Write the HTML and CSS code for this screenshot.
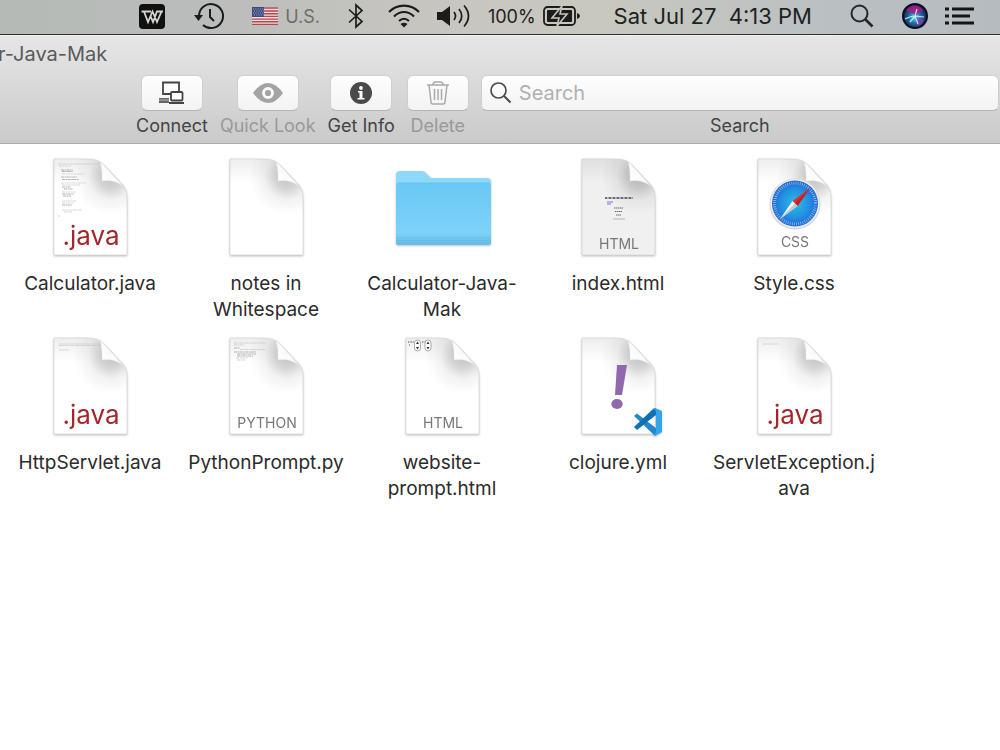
FILE: index.html
```html
<!DOCTYPE html>
<html lang="en">
<head>
  <meta charset="UTF-8" />
  <meta name="viewport" content="width=device-width, initial-scale=1" />
  <title>Calculator-Java-Mak</title>
  <link rel="stylesheet" href="styles.css">
</head>
<body>
  <!-- Shared shapes -->
  <svg class="defs" width="0" height="0" aria-hidden="true">
    <defs>
      <radialGradient id="shade" gradientUnits="userSpaceOnUse" cx="71" cy="19" r="38">
        <stop offset="0" stop-color="#000" stop-opacity=".24" />
        <stop offset=".3" stop-color="#000" stop-opacity=".17" />
        <stop offset=".6" stop-color="#000" stop-opacity=".05" />
        <stop offset="1" stop-color="#000" stop-opacity="0" />
      </radialGradient>
      <linearGradient id="topShade" x1="0" y1="0" x2="0" y2="1">
        <stop offset="0" stop-color="#000" stop-opacity=".07" />
        <stop offset=".25" stop-color="#000" stop-opacity="0" />
      </linearGradient>
      <linearGradient id="fold" gradientUnits="userSpaceOnUse" x1="62" y1="24" x2="74" y2="13">
        <stop offset="0" stop-color="#fff" />
        <stop offset=".75" stop-color="#fafafa" />
        <stop offset="1" stop-color="#dedede" />
      </linearGradient>
      <linearGradient id="folderFront" x1="0" y1="0" x2="0" y2="1">
        <stop offset="0" stop-color="#69c9f5" />
        <stop offset=".8" stop-color="#7dd2f9" />
        <stop offset="1" stop-color="#66bce6" />
      </linearGradient>
      <radialGradient id="compass">
        <stop offset="0" stop-color="#28bfe0" />
        <stop offset=".6" stop-color="#2391e3" />
        <stop offset="1" stop-color="#2464d2" />
      </radialGradient>
      <radialGradient id="siri" cx=".5" cy=".55">
        <stop offset="0" stop-color="#7fdcec" />
        <stop offset=".45" stop-color="#2478ad" />
        <stop offset="1" stop-color="#15204e" />
      </radialGradient>
      <symbol id="page" viewBox="0 0 100 100">
        <path d="M14 1H46C54 1 58 2 63 6L81 25C86 30 87 34 87 42V97H14Z" fill="currentColor" />
        <path d="M14 1H46C54 1 58 2 63 6L81 25C86 30 87 34 87 42V97H14Z" fill="url(#topShade)" />
        <path d="M14 1H46C54 1 58 2 63 6L81 25C86 30 87 34 87 42V97H14Z" fill="url(#shade)" stroke="#d2d2d2" stroke-width=".6" />
        <path d="M60 4C62 10 62 17 62 23C69 22 77 23 84 29L63 6Z" fill="url(#fold)" stroke="#dadada" stroke-width=".4" />
      </symbol>
    </defs>
  </svg>

  <header class="menubar">
    <svg class="icon-wps" width="27" height="27" viewBox="0 0 27 27">
      <rect y="1" width="26" height="25" rx="4" fill="#10110f" />
      <path d="M2.500 8.500H12M5 8.500L9 19L13.500 8.500L18 19L22.500 8.500M11.500 13L14 19L18 8.500H24" fill="none" stroke="#d2d3d2" stroke-width="1.800" />
    </svg>
    <svg class="icon-clock" width="30" height="28" viewBox="0 0 30 28">
      <path d="M5 14A12 12 0 1 1 9 23" fill="none" stroke="#1c1d1b" stroke-width="2" />
      <path d="M0 13H9L4.500 19Z" fill="#1c1d1b" />
      <path d="M16 7V15L20 19" fill="none" stroke="#1c1d1b" stroke-width="2" />
    </svg>
    <svg class="icon-flag" width="26" height="18" viewBox="0 0 26 18">
      <path d="M0 0H26V18H0Z" fill="#e9e2e0" />
      <path d="M0 1H26M0 4H26M0 6.700H26M0 9.400H26M0 12.100H26M0 14.800H26M0 17.400H26" stroke="#b8444c" stroke-width="1.400" />
      <path d="M0 0H12V10H0Z" fill="#3c4a80" />
      <path d="M1 2H12M2 4H12M1 6H12M2 8H12" stroke="#aab0cc" stroke-width="1" stroke-dasharray="1 1.300" />
    </svg>
    <span class="input-source">U.S.</span>
    <svg class="icon-bluetooth" width="16" height="26" viewBox="0 0 16 26">
      <path d="M1 6.500L14 18.500L8 24V2L14 7.500L1 19.500" fill="none" stroke="#1c1d1b" stroke-width="1.700" />
    </svg>
    <svg class="icon-wifi" width="32" height="24" viewBox="0 0 32 24">
      <path d="M1 8C9 -.5 23 -.5 31 8M6 12.500C12 6.500 20 6.500 26 12.500M11 17C14 14 18 14 21 17" fill="none" stroke="#1c1d1b" stroke-width="2.200" />
      <path d="M12.500 20Q16 17.500 19.500 20L16 23.500Z" fill="#1c1d1b" />
    </svg>
    <svg class="icon-volume" width="34" height="26" viewBox="0 0 34 26">
      <path d="M0 9H5L13 3V23L5 17H0Z" fill="#1c1d1b" />
      <path d="M17 9Q20 13 17 17M22 6Q27.500 13 22 20M27 2.500Q36 13 27 23.500" fill="none" stroke="#1c1d1b" stroke-width="1.700" />
    </svg>
    <span class="battery-level">100%</span>
    <svg class="icon-battery" width="37" height="22" viewBox="0 0 37 22">
      <rect x="1" y="2" width="31" height="18" rx="3.500" fill="none" stroke="#1c1d1b" stroke-width="1.800" />
      <path d="M34 8Q37 9 37 11Q37 13 34 14Z" fill="#1c1d1b" />
      <rect x="4" y="5" width="25" height="12" rx="1" fill="#1c1d1b" />
      <path d="M19 1L9 13H16L14 21L24 9H17Z" fill="#1c1d1b" stroke="#c6c5be" stroke-width="1.600" />
    </svg>
    <time class="clock">Sat Jul 27  4:13 PM</time>
    <svg class="icon-search" width="24" height="24" viewBox="0 0 24 24">
      <circle cx="9.500" cy="9.500" r="8" fill="none" stroke="#252729" stroke-width="2" />
      <path d="M15 15L22.500 22.500" stroke="#252729" stroke-width="2.600" />
    </svg>
    <svg class="icon-siri" width="26" height="26" viewBox="0 0 26 26">
      <circle cx="13" cy="13" r="12" fill="url(#siri)" stroke="#0d0e22" stroke-width="2" />
      <path d="M4 7Q13 -2 21 7L14 12Z" fill="#b01a80" opacity=".85" />
      <path d="M14 14L22 17Q19 23 15 23Z" fill="#8b3fae" opacity=".7" />
      <path d="M3 16Q9 13 13 13L15 6M13 13L22 14M13 13L8 19M13 13L16 21" fill="none" stroke="#b5ecf5" stroke-width="1.200" />
    </svg>
    <svg class="icon-list" width="30" height="18" viewBox="0 0 30 18">
      <path d="M0 2H4M7 2H29M0 9H4M7 9H25M0 16H4M7 16H29" stroke="#141516" stroke-width="3" />
    </svg>
  </header>

  <section class="toolbar">
    <h1 class="window-title">r-Java-Mak</h1>
    <div class="tools">
      <div class="tool">
        <button id="connect" type="button">
          <svg width="26" height="24" viewBox="0 0 26 24">
            <path d="M4 1.500H20V13H4Z" fill="#fff" stroke="#444" stroke-width="1.800" />
            <path d="M0 17H10V22H0Z" fill="#666" /><path d="M0 19H10" stroke="#bbb" stroke-width="1" />
            <rect x="12" y="11" width="11.500" height="8.500" rx="1" fill="#fff" stroke="#444" stroke-width="1.800" />
            <path d="M10 21H25V23H10Z" fill="#444" />
          </svg>
        </button>
        <label for="connect">Connect</label>
      </div>
      <div class="tool off">
        <button id="look" type="button" disabled>
          <svg width="30" height="20" viewBox="0 0 30 20">
            <path d="M0 10Q7 0 15 0Q23 0 30 10Q23 20 15 20Q7 20 0 10Z" fill="#a3a3a3" />
            <circle cx="15" cy="10" r="4.500" fill="#a3a3a3" stroke="#fafafa" stroke-width="2.800" />
          </svg>
        </button>
        <label for="look">Quick Look</label>
      </div>
      <div class="tool">
        <button id="info" type="button">
          <svg width="22" height="22" viewBox="0 0 22 22">
            <circle cx="11" cy="11" r="11" fill="#4a4a4a" />
            <circle cx="11" cy="6" r="1.900" fill="#fff" />
            <path d="M8 9H12.500V16H14.500V17.500H7.500V16H9.500V10.500H8Z" fill="#fff" />
          </svg>
        </button>
        <label for="info">Get Info</label>
      </div>
      <div class="tool off">
        <button id="delete" type="button" disabled>
          <svg width="22" height="24" viewBox="0 0 22 24">
            <path d="M0 4H22M6 4Q6 1 9 1H13Q16 1 16 4M2 4L4 21Q4 23 6 23H16Q18 23 18 21L20 4M7.500 8V19M11 8V19M14.500 8V19" fill="none" stroke="#aaa" stroke-width="1.500" />
          </svg>
        </button>
        <label for="delete">Delete</label>
      </div>
      <div class="tool search">
        <div class="search-box">
          <svg width="22" height="22" viewBox="0 0 22 22">
            <circle cx="8.500" cy="8.500" r="7.500" fill="none" stroke="#4c4c4c" stroke-width="1.700" />
            <path d="M14 14L20.500 20.500" stroke="#4c4c4c" stroke-width="2" />
          </svg>
          <input id="search" type="text" placeholder="Search">
        </div>
        <label for="search">Search</label>
      </div>
    </div>
  </section>

  <main class="files">
    <figure class="file">
      <svg viewBox="0 0 100 100">
        <use href="#page" />
        <g class="code">
          <path d="M18 6H60M19 8H31M22 16H44M21 25H46M22 27H40M22 34H36M22 43H36M22 45H34M22 52H42M24 54H32M18 58H20" />
          <path class="strong" d="M21 12H33M22 13.500H33M21 19H37M22 21.500H39M22 29H31M24 31H33M22 36H34M23 38H31M22 47H32" />
        </g>
        <text class="ext" x="51" y="87">.java</text>
      </svg>
      <figcaption>Calculator.java</figcaption>
    </figure>
    <figure class="file">
      <svg viewBox="0 0 100 100"><use href="#page" /></svg>
      <figcaption>notes in Whitespace</figcaption>
    </figure>
    <figure class="file">
      <svg viewBox="0 0 100 100">
        <path d="M4 17Q4 13 8 13H30Q33 13 35 16L39 20H95Q99 20 99 24V60H4Z" fill="#8ed8fb" />
        <rect x="4" y="25" width="95" height="62" rx="2.500" fill="url(#folderFront)" />
        <path d="M4 80H99M4 82.500H99M4 85H99" stroke="#62b8e1" stroke-width=".6" />
        <path d="M6 25H97" stroke="#62bde9" stroke-width=".7" />
      </svg>
      <figcaption>Calculator-Java-Mak</figcaption>
    </figure>
    <figure class="file">
      <svg viewBox="0 0 100 100">
        <use href="#page" class="tinted" />
        <path d="M37 40H65" stroke="#445" stroke-width="1.500" stroke-dasharray="2 .6 1 .4" />
        <path d="M39 44H45M39 46H43" stroke="#7a70dd" stroke-width="1" />
        <path d="M46 50H55M47 53.500H54M48 57H53" stroke="#666" stroke-width="1.200" stroke-dasharray="1.500 .5" />
        <path d="M45 61H57" stroke="#999" stroke-width=".7" />
        <text class="kind" x="51" y="91">HTML</text>
      </svg>
      <figcaption>index.html</figcaption>
    </figure>
    <figure class="file">
      <svg viewBox="0 0 100 100">
        <use href="#page" />
        <circle cx="51" cy="46" r="25.500" fill="#d3d6da" />
        <circle cx="51" cy="45.500" r="24.500" fill="#eceef0" />
        <circle cx="51" cy="45.500" r="23" fill="url(#compass)" />
        <circle cx="51" cy="45.500" r="20.500" fill="none" stroke="#a6d5f5" stroke-width="3" stroke-dasharray=".6 1.550" />
        <path d="M66 30L48.500 43L53.500 48Z" fill="#e32d35" /><path d="M66 30L51 45.500L53.500 48Z" fill="#b9202e" />
        <path d="M36 61L48.500 43L53.500 48Z" fill="#f4f4f4" /><path d="M36 61L51 45.500L53.500 48Z" fill="#bfc7cf" />
        <text class="kind" x="51" y="89">CSS</text>
      </svg>
      <figcaption>Style.css</figcaption>
    </figure>
    <figure class="file">
      <svg viewBox="0 0 100 100">
        <use href="#page" />
        <g class="code"><path d="M19 7H61M19 8.500H61M19 13H29" /></g>
        <text class="ext" x="51" y="87">.java</text>
      </svg>
      <figcaption>HttpServlet.java</figcaption>
    </figure>
    <figure class="file">
      <svg viewBox="0 0 100 100">
        <use href="#page" />
        <g class="code">
          <path d="M18 6H49M18 8H28M24 12.500H50M20 21H32M21 23H29" />
          <path class="strong" d="M18 11H24M18 15H40M21 17H40M21 19H37" />
        </g>
        <text class="kind" x="51" y="91">PYTHON</text>
      </svg>
      <figcaption>PythonPrompt.py</figcaption>
    </figure>
    <figure class="file">
      <svg viewBox="0 0 100 100">
        <use href="#page" />
        <path d="M16 5H22M30 5H33M17 8H18" stroke="#555" stroke-width="1" stroke-dasharray="1 .6" />
        <rect x="22.500" y="3" width="6" height="11" rx="3" fill="#fff" stroke="#999" stroke-width=".8" />
        <rect x="33" y="3" width="6" height="11" rx="3" fill="#fff" stroke="#999" stroke-width=".8" />
        <path d="M24 7L25.500 4.500L27 7ZM24 10L25.500 12.500L27 10ZM34.500 7L36 4.500L37.500 7ZM34.500 10L36 12.500L37.500 10Z" fill="#333" />
        <text class="kind" x="51" y="91">HTML</text>
      </svg>
      <figcaption>website-prompt.html</figcaption>
    </figure>
    <figure class="file">
      <svg viewBox="0 0 100 100">
        <use href="#page" />
        <path d="M49 28H59L54 58H47Z" fill="#9068b0" />
        <ellipse cx="49" cy="67" rx="5.700" ry="5" fill="#9068b0" />
        <path d="M66 79L69 76.500L88 91V98.500L85 97Z" fill="#2489ca" />
        <path d="M66 90L69 93L88 78V71L85 72Z" fill="#1070b3" />
        <path d="M87 71L94 74V95L87 99L84 97Q88 98 88 94V76Q88 72 84 72Z" fill="#32a5ec" />
      </svg>
      <figcaption>clojure.yml</figcaption>
    </figure>
    <figure class="file">
      <svg viewBox="0 0 100 100">
        <use href="#page" />
        <g class="code"><path d="M19 7H35" /></g>
        <text class="ext" x="51" y="87">.java</text>
      </svg>
      <figcaption>ServletException.java</figcaption>
    </figure>
  </main>
</body>
</html>
```
FILE: styles.css
```css
* {
  box-sizing: border-box;
}
body {
  margin: 0;
  background: #fff;
  color: #2b2b2b;
  font-family: Inter, "Liberation Sans", sans-serif;
  overflow-x: hidden;
}
svg {
  display: block;
  flex: none;
}
.defs {
  position: absolute;
}

/* Menu bar */
.menubar {
  display: flex;
  justify-content: flex-end;
  align-items: center;
  height: 35px;
  padding: 0 25px 2px 0;
  background: linear-gradient(90deg, #b5bab6, #babcbb 20%, #c8c6c0 45%, #c8c8bf 60%, #b9bfc2 85%, #b5bbbf);
  border-bottom: 1px solid #30312a;
  color: #20211f;
  white-space: pre;
}
.icon-clock,
.icon-flag,
.icon-bluetooth,
.icon-siri {
  margin-left: 28px;
}
.icon-wifi {
  margin-left: 24px;
}
.icon-volume,
.battery-level,
.icon-list {
  margin-left: 17px;
}
.input-source,
.icon-battery {
  margin-left: 7px;
}
.input-source,
.battery-level {
  font-size: 18px;
}
.input-source {
  color: #6c6d6c;
}
.clock {
  margin-left: 34px;
  font-size: 22px;
}
.icon-search {
  margin-left: 38px;
}

/* Window toolbar */
.toolbar {
  height: 109px;
  background: linear-gradient(#e6e6e6, #cacaca);
  border-top: 1px solid #f2f2f2;
  border-bottom: 1px solid #a9a9a9;
}
.window-title {
  margin: 0 0 0 -2px;
  padding-top: 5px;
  font-size: 20px;
  line-height: 26px;
  font-weight: 400;
  color: #5a5a5a;
}
.tools {
  display: flex;
  gap: 12px;
  padding: 8px 1px 0 136px;
}
.tool {
  display: flex;
  flex-direction: column;
  align-items: center;
  color: #444;
}
.tool label {
  font-size: 18px;
  line-height: 30px;
}
.tool.off label {
  color: #999;
}
.tool button,
.search-box {
  display: flex;
  align-items: center;
  justify-content: center;
  height: 36px;
  padding: 0;
  background: linear-gradient(#fefefe, #f3f3f3);
  border: 1px solid #cfcfcf;
  border-bottom-color: #b5b5b5;
  border-radius: 6px;
}
.tool button {
  width: 62px;
}
.search {
  flex: 1;
}
.search-box {
  width: 100%;
  padding: 0 8px;
  gap: 7px;
}
.search-box input {
  flex: 1;
  min-width: 0;
  padding: 0;
  border: none;
  outline: none;
  background: none;
  font-family: inherit;
  font-size: 20px;
}
.search-box input::placeholder {
  color: #b0b0b0;
}

/* File icons */
.files {
  display: grid;
  grid-template-columns: repeat(auto-fill, 176px);
  grid-auto-rows: 179px;
  padding: 14px 2px;
}
.file {
  margin: 0;
  padding: 0 6px;
  text-align: center;
}
.file svg {
  width: 100px;
  height: 100px;
  margin: 0 auto 13px;
  color: #fff;
  filter: drop-shadow(0 1px 1px rgba(0, 0, 0, 0.25));
}
.file .tinted {
  color: #f0f0f0;
}
.file figcaption {
  font-size: 19px;
  line-height: 26px;
  overflow-wrap: anywhere;
}
.code path {
  fill: none;
  stroke: #c4c4c4;
  stroke-width: 0.7;
  stroke-dasharray: 3 0.6 1.5 0.5;
}
.code .strong {
  stroke: #a0a0a0;
  stroke-width: 0.8;
}
.ext {
  font-size: 26px;
  text-anchor: middle;
  fill: #a5262a;
}
.kind {
  font-size: 14px;
  text-anchor: middle;
  fill: #777;
}
```
